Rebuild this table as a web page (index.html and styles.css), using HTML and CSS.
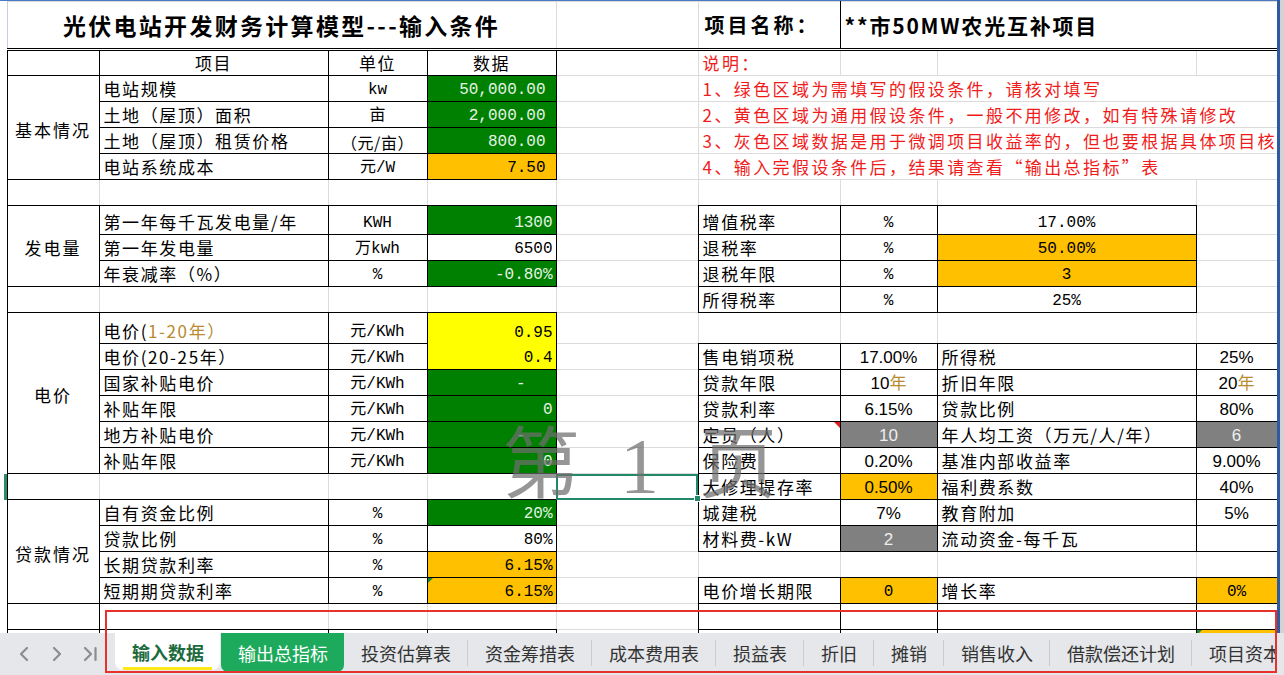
FILE: index.html
```html
<!DOCTYPE html>
<html lang="zh-CN">
<head>
<meta charset="utf-8">
<title>输入数据</title>
<link rel="stylesheet" href="styles.css">
</head>
<body>
<div class="app">
  <div class="main">
    <div class="sheet">
      <table class="grid">
        <colgroup>
          <col class="w-gut"><col class="w-a"><col class="w-b"><col class="w-c"><col class="w-d"><col class="w-e"><col class="w-f"><col class="w-g"><col class="w-h"><col class="w-i">
        </colgroup>
        <tbody>
          <tr class="h-title">
            <td class="gut"></td>
            <td colspan="4" class="title tb">光伏电站开发财务计算模型---输入条件</td>
            <td class="tb"></td>
            <td class="pname tb">项目名称：</td>
            <td colspan="3" class="pval tb bl">**市50MW农光互补项目</td>
          </tr>
          <tr class="h25">
            <td class="gut"></td>
            <td class="b"></td>
            <td class="b c">项目</td>
            <td class="b c">单位</td>
            <td class="b c">数据</td>
            <td></td>
            <td class="red">说明：</td>
            <td></td><td></td><td></td>
          </tr>
          <tr>
            <td class="gut"></td>
            <td class="b lbl" rowspan="4">基本情况</td>
            <td class="b t">电站规模</td>
            <td class="b u">kw</td>
            <td class="b n green pr">50,000.00</td>
            <td></td>
            <td colspan="4" class="red">1、绿色区域为需填写的假设条件，请核对填写</td>
          </tr>
          <tr>
            <td class="gut"></td>
            <td class="b t">土地（屋顶）面积</td>
            <td class="b u">亩</td>
            <td class="b n green pr">2,000.00</td>
            <td></td>
            <td colspan="4" class="red">2、黄色区域为通用假设条件，一般不用修改，如有特殊请修改</td>
          </tr>
          <tr>
            <td class="gut"></td>
            <td class="b t">土地（屋顶）租赁价格</td>
            <td class="b u cjk">（元/亩）</td>
            <td class="b n green pr">800.00</td>
            <td></td>
            <td colspan="4" class="red">3、灰色区域数据是用于微调项目收益率的，但也要根据具体项目核对填写</td>
          </tr>
          <tr>
            <td class="gut"></td>
            <td class="b t">电站系统成本</td>
            <td class="b u">元/W</td>
            <td class="b n orange pr">7.50</td>
            <td></td>
            <td colspan="4" class="red">4、输入完假设条件后，结果请查看“输出总指标”表</td>
          </tr>
          <tr>
            <td class="gut"></td>
            <td class="bl"></td><td></td><td></td><td></td><td></td><td></td><td></td><td></td><td></td>
          </tr>
          <tr class="h29">
            <td class="gut"></td>
            <td class="b lbl" rowspan="3">发电量</td>
            <td class="b t">第一年每千瓦发电量/年</td>
            <td class="b u">KWH</td>
            <td class="b n green">1300</td>
            <td></td>
            <td class="b t">增值税率</td>
            <td class="b u">%</td>
            <td class="b u">17.00%</td>
            <td></td>
          </tr>
          <tr>
            <td class="gut"></td>
            <td class="b t">第一年发电量</td>
            <td class="b u">万kwh</td>
            <td class="b n">6500</td>
            <td></td>
            <td class="b t">退税率</td>
            <td class="b u">%</td>
            <td class="b u orange">50.00%</td>
            <td></td>
          </tr>
          <tr>
            <td class="gut"></td>
            <td class="b t">年衰减率（%）</td>
            <td class="b u">%</td>
            <td class="b n green">-0.80%</td>
            <td></td>
            <td class="b t">退税年限</td>
            <td class="b u">%</td>
            <td class="b u orange">3</td>
            <td></td>
          </tr>
          <tr>
            <td class="gut"></td>
            <td class="bl"></td><td></td><td></td><td></td><td></td>
            <td class="b t">所得税率</td>
            <td class="b u">%</td>
            <td class="b u">25%</td>
            <td></td>
          </tr>
          <tr class="h31">
            <td class="gut"></td>
            <td class="b lbl" rowspan="6">电价</td>
            <td class="b t">电价(<span class="gold">1-20年）</span></td>
            <td class="b u">元/KWh</td>
            <td class="b n yellow nbb">0.95</td>
            <td></td><td></td><td></td><td></td><td></td>
          </tr>
          <tr>
            <td class="gut"></td>
            <td class="b t">电价(20-25年）</td>
            <td class="b u">元/KWh</td>
            <td class="b n yellow nbt">0.4</td>
            <td></td>
            <td class="b t">售电销项税</td>
            <td class="b s">17.00%</td>
            <td class="b t">所得税</td>
            <td class="b s">25%</td>
          </tr>
          <tr>
            <td class="gut"></td>
            <td class="b t">国家补贴电价</td>
            <td class="b u">元/KWh</td>
            <td class="b n green dash">-</td>
            <td></td>
            <td class="b t">贷款年限</td>
            <td class="b s">10<span class="gold cj">年</span></td>
            <td class="b t">折旧年限</td>
            <td class="b s">20<span class="gold cj">年</span></td>
          </tr>
          <tr>
            <td class="gut"></td>
            <td class="b t">补贴年限</td>
            <td class="b u">元/KWh</td>
            <td class="b n green">0</td>
            <td></td>
            <td class="b t">贷款利率</td>
            <td class="b s">6.15%</td>
            <td class="b t">贷款比例</td>
            <td class="b s">80%</td>
          </tr>
          <tr>
            <td class="gut"></td>
            <td class="b t">地方补贴电价</td>
            <td class="b u">元/KWh</td>
            <td class="b n green dash">-</td>
            <td></td>
            <td class="b t cmt">定员（人）</td>
            <td class="b s gray">10</td>
            <td class="b t">年人均工资（万元/人/年）</td>
            <td class="b s gray">6</td>
          </tr>
          <tr>
            <td class="gut"></td>
            <td class="b t">补贴年限</td>
            <td class="b u">元/KWh</td>
            <td class="b n green">0</td>
            <td></td>
            <td class="b t">保险费</td>
            <td class="b s">0.20%</td>
            <td class="b t">基准内部收益率</td>
            <td class="b s">9.00%</td>
          </tr>
          <tr>
            <td class="gut mark"></td>
            <td class="bl"></td><td></td><td></td><td></td>
            <td class="sel"></td>
            <td class="b t">大修理提存率</td>
            <td class="b s orange">0.50%</td>
            <td class="b t">福利费系数</td>
            <td class="b s">40%</td>
          </tr>
          <tr>
            <td class="gut"></td>
            <td class="b lbl" rowspan="4">贷款情况</td>
            <td class="b t">自有资金比例</td>
            <td class="b u">%</td>
            <td class="b n green">20%</td>
            <td></td>
            <td class="b t">城建税</td>
            <td class="b s">7%</td>
            <td class="b t">教育附加</td>
            <td class="b s">5%</td>
          </tr>
          <tr>
            <td class="gut"></td>
            <td class="b t">贷款比例</td>
            <td class="b u">%</td>
            <td class="b n">80%</td>
            <td></td>
            <td class="b t">材料费-kW</td>
            <td class="b s gray">2</td>
            <td class="b t">流动资金-每千瓦</td>
            <td class="b s"></td>
          </tr>
          <tr>
            <td class="gut"></td>
            <td class="b t">长期贷款利率</td>
            <td class="b u">%</td>
            <td class="b n orange">6.15%</td>
            <td></td><td></td><td></td><td></td><td></td>
          </tr>
          <tr>
            <td class="gut"></td>
            <td class="b t">短期期贷款利率</td>
            <td class="b u">%</td>
            <td class="b n orange tri">6.15%</td>
            <td></td>
            <td class="b t">电价增长期限</td>
            <td class="b u orange">0</td>
            <td class="b t">增长率</td>
            <td class="b u orange">0%</td>
          </tr>
          <tr>
            <td class="gut"></td>
            <td class="bl br"></td><td></td><td></td><td></td><td></td>
            <td class="b"></td><td class="b"></td><td class="b"></td><td class="b"></td>
          </tr>
          <tr>
            <td class="gut"></td>
            <td class="b"></td><td class="b"></td><td class="b"></td><td class="b"></td><td></td>
            <td class="b"></td><td class="b"></td><td class="b"></td><td class="b orange tri"></td>
          </tr>
        </tbody>
      </table>
    </div>
    <div class="vbar"></div>
  </div>

  <div class="tabbar">
    <div class="nav">
      <svg class="arr" viewBox="0 0 14 16"><path d="M10 2 L4 8 L10 14"/></svg>
      <svg class="arr" viewBox="0 0 14 16"><path d="M4 2 L10 8 L4 14"/></svg>
      <svg class="arr" viewBox="0 0 14 16"><path d="M2 2 L8 8 L2 14 M12.5 2 V14"/></svg>
    </div>
    <div class="tabs">
      <div class="tab active">输入数据</div>
      <div class="tab green">输出总指标</div>
      <div class="tab">投资估算表</div>
      <div class="tab">资金筹措表</div>
      <div class="tab">成本费用表</div>
      <div class="tab">损益表</div>
      <div class="tab">折旧</div>
      <div class="tab">摊销</div>
      <div class="tab">销售收入</div>
      <div class="tab">借款偿还计划</div>
      <div class="tab">项目资本金现金流量表</div>
    </div>
    <div class="tabfill"></div>
  </div>

  <div class="wm"><span>第</span><span class="wm1">1</span><span>页</span></div>
  <div class="redbox"></div>
</div>
</body>
</html>
```

FILE: styles.css
```css
html, body {
  margin: 0;
  padding: 0;
  background: #ffffff;
}

.app {
  position: relative;
  width: 1284px;
  height: 675px;
  display: flex;
  flex-direction: column;
  overflow: hidden;
  font-family: "Noto Sans CJK SC", "Noto Sans CJK JP", sans-serif;
}

.main {
  display: flex;
  height: 633px;
  flex: none;
}

.sheet {
  width: 1277px;
  height: 633px;
  overflow: hidden;
  border-top: 1px solid #4a78c2;
  box-sizing: border-box;
  flex: none;
}

.vbar {
  width: 7px;
  flex: none;
  border-left: 3px solid #2d5aa0;
  background: #d2d2d2;
  box-sizing: border-box;
}

/* ---------- grid ---------- */
.grid {
  border-collapse: collapse;
  table-layout: fixed;
  width: 1277px;
}

.w-gut { width: 7px; }
.w-a { width: 92px; }
.w-b { width: 229px; }
.w-c { width: 99px; }
.w-d { width: 129px; }
.w-e { width: 142px; }
.w-f { width: 142px; }
.w-g { width: 97px; }
.w-h { width: 259px; }
.w-i { width: 81px; }

.grid tr { height: 26px; }
.grid tr.h-title { height: 48px; }
.grid tr.h25 { height: 25px; }
.grid tr.h29 { height: 29px; }
.grid tr.h31 { height: 31px; }

.grid td {
  border: 1px solid #dcdcdc;
  padding: 0 3px;
  white-space: nowrap;
  overflow: hidden;
  vertical-align: bottom;
  font-size: 17px;
  letter-spacing: 1.6px;
  line-height: 24px;
  color: #000;
}

.grid td.gut {
  border-top: none;
  border-bottom: none;
  border-left: none;
  border-right: 1px solid #c5cfdc;
  padding: 0;
}

.grid td.mark {
  box-shadow: inset -3px 0 0 #2b8a6e;
}

/* black borders: 1px double renders solid and wins over grid lines */
.grid td.b { border: 1px double #000; }
.grid td.bl { border-left: 1px double #000; }
.grid td.br { border-right: 1px double #000; }
.grid td.tb { border-bottom: 3px double #000; }
.grid td.nbb { border-bottom-style: hidden; }
.grid td.nbt { border-top-style: hidden; }

/* title row */
.grid td.title {
  text-align: center;
  vertical-align: middle;
  font-size: 23px;
  font-weight: 700;
  letter-spacing: 2.3px;
  line-height: 30px;
}

.grid td.pname {
  vertical-align: middle;
  font-size: 20px;
  font-weight: 700;
  letter-spacing: 3px;
  padding-left: 6px;
  line-height: 30px;
}

.grid td.pval {
  vertical-align: middle;
  font-size: 21px;
  font-weight: 700;
  letter-spacing: 1.8px;
  padding-left: 4px;
  line-height: 30px;
}

/* cell kinds */
.grid td.c { text-align: center; }

.grid td.t {
  text-align: left;
  padding-left: 4px;
}

.grid td.lbl {
  text-align: center;
  vertical-align: middle;
  letter-spacing: 2px;
  padding-top: 4px;
}

.grid td.u {
  text-align: center;
  font-family: "Liberation Mono", "Noto Sans CJK SC", monospace;
  font-size: 16px;
  letter-spacing: 0;
  line-height: 22px;
}

.grid td.u.cjk {
  font-family: "Noto Sans CJK SC", sans-serif;
  letter-spacing: 0.5px;
}

.grid td.n {
  text-align: right;
  font-family: "Liberation Mono", "Noto Sans CJK SC", monospace;
  font-size: 16px;
  letter-spacing: 0;
  line-height: 22px;
  padding-right: 3px;
}

.grid td.pr { padding-right: 10px; }
.grid td.dash { padding-right: 30px; }

.grid td.s {
  text-align: center;
  font-family: "Liberation Sans", "Noto Sans CJK SC", sans-serif;
  font-size: 17px;
  letter-spacing: 0;
  line-height: 23px;
}

.cj {
  font-family: "Noto Sans CJK SC", sans-serif;
}

.gold { color: #b98a2e; }

.grid td.red {
  color: #f01c1c;
  font-size: 17px;
  letter-spacing: 2.4px;
  padding-left: 4px;
}

/* fills */
.grid td.green { background: #008000; color: #e6f4e6; }
.grid td.orange { background: #ffc000; }
.grid td.yellow { background: #ffff00; }
.grid td.gray { background: #808080; color: #eeeeee; }

/* indicators */
.grid td.cmt { position: relative; }
.grid td.cmt::after {
  content: "";
  position: absolute;
  top: 0;
  right: 0;
  border-top: 6px solid #e02020;
  border-left: 6px solid transparent;
}

.grid td.tri { position: relative; }
.grid td.tri::before {
  content: "";
  position: absolute;
  top: 0;
  left: 0;
  border-top: 5px solid #1a8a3a;
  border-right: 5px solid transparent;
}

.grid td.sel {
  position: relative;
  overflow: visible;
  outline: 2px solid #21896a;
  outline-offset: -2px;
}
.grid td.sel::after {
  content: "";
  position: absolute;
  right: -3px;
  bottom: -3px;
  width: 5px;
  height: 5px;
  background: #21896a;
  border: 1px solid #ffffff;
  z-index: 2;
}

/* ---------- tab bar ---------- */
.tabbar {
  height: 42px;
  flex: none;
  display: flex;
  background: #e5e7ea;
}

.nav {
  width: 115px;
  flex: none;
  display: flex;
  align-items: center;
  gap: 19px;
  padding-left: 17px;
  box-sizing: border-box;
}

.arr {
  width: 14px;
  height: 16px;
  fill: none;
  stroke: #8c8c8c;
  stroke-width: 2.2;
  stroke-linecap: round;
  stroke-linejoin: round;
}

.tabs {
  width: 1162px;
  flex: none;
  display: flex;
  align-items: flex-start;
  overflow: hidden;
}

.tabfill {
  flex: 1;
}

.tab {
  flex: none;
  display: flex;
  align-items: center;
  height: 39px;
  padding: 0 17px;
  font-size: 18px;
  color: #333333;
  white-space: nowrap;
  background: linear-gradient(#c9cbce, #c9cbce) right center / 1px 26px no-repeat;
}

.tab.active {
  position: relative;
  height: 37px;
  padding: 0 16px 0 17px;
  background: #ffffff;
  color: #1c6b3d;
  font-weight: 700;
  border-radius: 0 0 8px 8px;
}
.tab.active::after {
  content: "";
  position: absolute;
  left: 8px;
  right: 8px;
  bottom: 0;
  height: 3px;
  background: #ffe816;
}

.tab.green {
  margin-left: 1px;
  padding: 0 16px 0 17px;
  background: #1eaa5c;
  color: #ffffff;
  border-radius: 0 0 7px 7px;
}

/* ---------- overlays ---------- */
.wm {
  position: absolute;
  left: 502px;
  top: 419px;
  display: flex;
  align-items: baseline;
  gap: 40px;
  font-size: 78px;
  line-height: 1;
  color: rgba(110, 110, 110, 0.72);
  pointer-events: none;
}
.wm1 {
  font-family: "Liberation Serif", serif;
}

.redbox {
  position: absolute;
  left: 105px;
  top: 610px;
  width: 1172px;
  height: 63px;
  box-sizing: border-box;
  border: 2px solid #e8312a;
  pointer-events: none;
}
```
